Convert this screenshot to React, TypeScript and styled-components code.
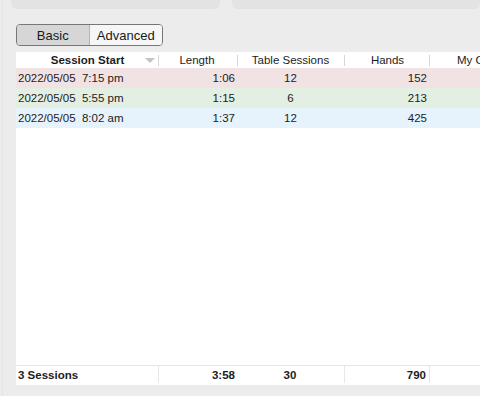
import React from "react";
import styled, { createGlobalStyle } from "styled-components";

const Global = createGlobalStyle`
  html, body { margin: 0; padding: 0; background: #ececec; }
  body { font-family: "Liberation Sans", Arial, sans-serif; width: 480px; height: 396px; overflow: hidden; }
`;

const COLS = "143px 79px 107px 85px 66px";

const Page = styled.div`
  position: relative;
  height: 396px;
  display: flex;
  flex-direction: column;
  box-sizing: border-box;
  border-left: 1px solid #e4e4e4;
  margin-left: 2px;
  width: 478px;
`;

const TopBar = styled.div`
  display: flex;
  gap: 12px;
  padding-left: 8px;
  height: 9px;
`;

const TopPanel = styled.div<{ $w: number }>`
  width: ${(p) => p.$w}px;
  flex: ${(p) => (p.$w ? "none" : "1")};
  background: #e3e3e3;
  border-radius: 0 0 6px 6px;
`;

const Segmented = styled.div`
  margin: 15px 0 0 13px;
  display: flex;
  width: 147px;
  height: 22px;
  box-sizing: border-box;
  border: 1px solid #767676;
  border-radius: 4px;
  overflow: hidden;
`;

const Seg = styled.div<{ $on?: boolean; $w: number }>`
  width: ${(p) => p.$w}px;
  display: flex;
  align-items: center;
  justify-content: center;
  font-size: 13px;
  color: #1a1a1a;
  background: ${(p) => (p.$on ? "#d6d6d6" : "#f6f6f6")};
  border-right: ${(p) => (p.$on ? "1px solid #b5b5b5" : "none")};
`;

const Table = styled.div`
  margin: 6px 0 0 13px;
  height: 333px;
  background: #fff;
  display: flex;
  flex-direction: column;
  overflow: hidden;
`;

const Row = styled.div<{ $bg?: string; $h: number }>`
  display: grid;
  grid-template-columns: ${COLS};
  height: ${(p) => p.$h}px;
  background: ${(p) => p.$bg || "#fff"};
  font-size: 11.5px;
  color: #1c1c1c;
`;

const HeadCell = styled.div<{ $bold?: boolean; $last?: boolean; $shift?: number }>`
  position: relative;
  display: flex;
  align-items: center;
  justify-content: ${(p) => (p.$last ? "flex-start" : "center")};
  padding-left: ${(p) => (p.$last ? "27px" : "0")};
  padding-right: ${(p) => (p.$shift ? `${p.$shift}px` : "0")};
  font-weight: ${(p) => (p.$bold ? 700 : 400)};
  white-space: nowrap;
  overflow: hidden;
  &::after {
    content: "";
    display: ${(p) => (p.$last ? "none" : "block")};
    position: absolute;
    right: 0;
    top: 3px;
    bottom: 2px;
    width: 1px;
    background: #d6d6d6;
  }
`;

const Cell = styled.div<{ $align: string; $bold?: boolean; $line?: boolean }>`
  display: flex;
  align-items: center;
  justify-content: ${(p) => p.$align};
  padding-left: ${(p) => (p.$align === "flex-start" ? "2px" : "0")};
  padding-right: ${(p) => (p.$align === "center" ? "2px" : "3px")};
  font-weight: ${(p) => (p.$bold ? 700 : 400)};
  white-space: pre;
  overflow: hidden;
  border-right: ${(p) => (p.$line ? "1px solid #e8e8e8" : "none")};
`;

const Sort = styled.svg`
  position: absolute;
  right: 4px;
  top: 6px;
`;

const Spacer = styled.div`
  flex: 1;
`;

const Footer = styled(Row)`
  border-top: 1px solid #e6e6e6;
  padding-bottom: 2px;
`;

const rows = [
  { bg: "#f1e3e3", start: "2022/05/05  7:15 pm", len: "1:06", ts: "12", hands: "152" },
  { bg: "#e4efe3", start: "2022/05/05  5:55 pm", len: "1:15", ts: "6", hands: "213" },
  { bg: "#e7f3fc", start: "2022/05/05  8:02 am", len: "1:37", ts: "12", hands: "425" },
];

export default function App() {
  return (
    <>
      <Global />
      <Page>
        <TopBar>
          <TopPanel $w={209} />
          <TopPanel $w={0} />
        </TopBar>
        <Segmented>
          <Seg $on $w={73}>Basic</Seg>
          <Seg $w={74}>Advanced</Seg>
        </Segmented>
        <Table>
          <Row $h={16}>
            <HeadCell $bold>
              Session Start
              <Sort width="10" height="5" viewBox="0 0 10 5">
                <path d="M0 0 L10 0 L5 5 Z" fill="#c4c4c4" />
              </Sort>
            </HeadCell>
            <HeadCell $shift={3}>Length</HeadCell>
            <HeadCell $shift={2}>Table Sessions</HeadCell>
            <HeadCell>Hands</HeadCell>
            <HeadCell $last>My C</HeadCell>
          </Row>
          {rows.map((r) => (
            <Row key={r.start} $h={20} $bg={r.bg}>
              <Cell $align="flex-start">{r.start}</Cell>
              <Cell $align="flex-end">{r.len}</Cell>
              <Cell $align="center">{r.ts}</Cell>
              <Cell $align="flex-end">{r.hands}</Cell>
              <Cell $align="flex-start" />
            </Row>
          ))}
          <Spacer />
          <Footer $h={17}>
            <Cell $align="flex-start" $bold $line>3 Sessions</Cell>
            <Cell $align="flex-end" $bold>3:58</Cell>
            <Cell $align="center" $bold $line>30</Cell>
            <Cell $align="flex-end" $bold $line>790</Cell>
            <Cell $align="flex-start" />
          </Footer>
        </Table>
      </Page>
    </>
  );
}
